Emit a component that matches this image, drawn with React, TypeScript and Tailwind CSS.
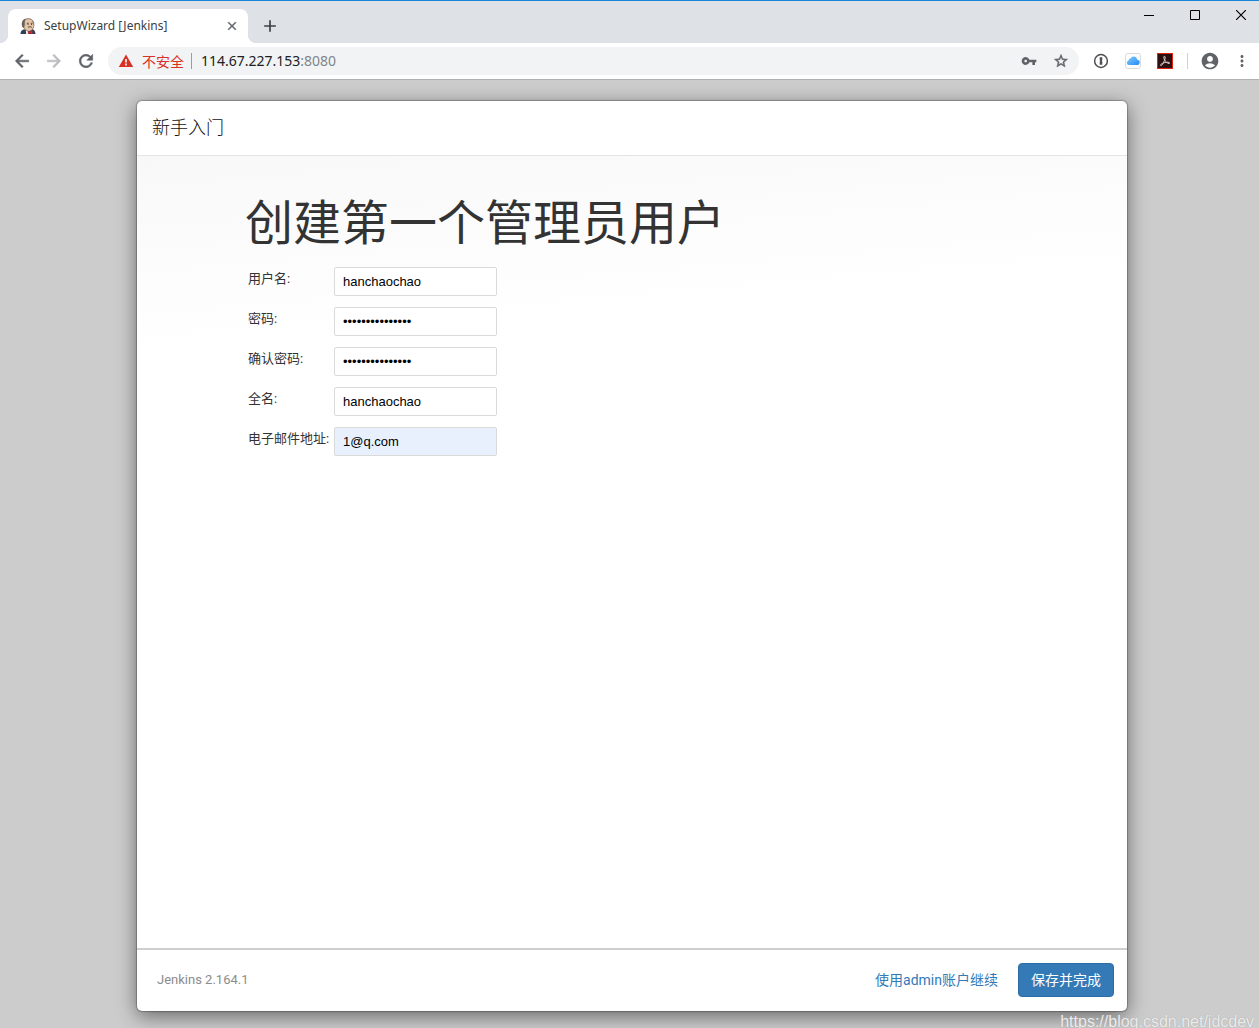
import React from "react";
import { MdAccountCircle, MdAdd, MdMoreVert, MdVpnKey } from "react-icons/md";

const toolButton = "flex h-7 w-8 shrink-0 items-center justify-center";

function BoldIcon({ d, className }: { d: string; className: string }) {
  return (
    <svg viewBox="0 0 24 24" className={className} fill="currentColor" stroke="currentColor" strokeWidth=".7" aria-hidden="true">
      <path d={d} />
    </svg>
  );
}

const iconPaths = {
  back: "M20 11H7.830l5.590-5.590L12 4l-8 8 8 8 1.410-1.410L7.830 13H20v-2z",
  forward: "M12 4l-1.410 1.410L16.170 11H4v2h12.170l-5.580 5.590L12 20l8-8z",
  reload:
    "M17.650 6.350A7.958 7.958 0 0 0 12 4c-4.420 0-7.990 3.580-7.990 8s3.570 8 7.990 8c3.730 0 6.840-2.550 7.730-6h-2.080A5.990 5.990 0 0 1 12 18c-3.310 0-6-2.690-6-6s2.690-6 6-6c1.660 0 3.140.690 4.220 1.780L13 11h7V4l-2.350 2.350z",
  close: "M19 6.410L17.590 5 12 10.590 6.410 5 5 6.410 10.590 12 5 17.590 6.410 19 12 13.410 17.590 19 19 17.590 13.410 12z",
  star: "M22 9.240l-7.190-.620L12 2 9.190 8.630 2 9.240l5.460 4.730L5.820 21 12 17.270 18.180 21l-1.630-7.030L22 9.240zM12 15.400l-3.760 2.270 1-4.280-3.320-2.880 4.380-.380L12 6.100l1.710 4.040 4.380.380-3.320 2.880 1 4.280L12 15.400z",
};

function JenkinsIcon() {
  return (
    <svg viewBox="0 0 16 16" className="size-4 shrink-0" aria-hidden="true">
      <path d="M.5 16c0-2.400.8-3.900 2.800-4.600l8.700-.4c2.300.6 3.300 2.300 3.500 5z" fill="#2f4152" />
      <path d="M3 6C2.800 2.600 4.900.7 8 .6c3.500 0 5.800 2 5.900 5.400.1 3.600-1.500 7.200-5 7.300C5.200 13.200 3.200 9.800 3 6z" fill="#e3c4a6" stroke="#5b4b40" strokeWidth=".6" />
      <path d="M2.300 9C1.200 5.800 1.700 2.300 4.800 1l1.200.3C4.700 2.700 4.600 4.800 4.800 7.200L3.900 10z" fill="#6b625b" />
      <path d="M12.200 2.200c1.300.9 1.900 2.800 1.500 4.800l-.8-.9z" fill="#8b7b6e" />
      <path d="M6.800 5.300h2M10.700 5.300h1.700M8 9.300c1.300-.7 2.900-.7 3.900 0" stroke="#54463c" strokeWidth=".9" fill="none" />
      <circle cx="8" cy="6.500" r=".5" fill="#222" />
      <circle cx="11.500" cy="6.500" r=".5" fill="#222" />
      <path d="M5.800 12.400l2.200 1L8.500 16H6.300z" fill="#fff" />
      <path d="M7.800 13l1.900.8 2.600-.8v3l-2.600-.9-1.900.9z" fill="#d7282f" />
    </svg>
  );
}

function WarningIcon() {
  return (
    <svg viewBox="0 0 16 16" className="size-4 shrink-0 text-[#d93025]" aria-hidden="true">
      <path d="M8 1.500L15.200 14H.8z" fill="currentColor" />
      <path d="M8 6v3.500M8 10.500v2" stroke="#fff" strokeWidth="1.600" />
    </svg>
  );
}

function PasswordManagerIcon() {
  return (
    <svg viewBox="0 0 16 16" className="size-4" aria-hidden="true">
      <circle cx="8" cy="8" r="6.400" fill="#fff" stroke="#4d4f52" strokeWidth="1.500" />
      <path d="M6.700 4.300h2.600v3l-.6.700.6.600v3.100H6.700v-3l.6-.7-.6-.6z" fill="#4d4f52" />
    </svg>
  );
}

function CloudIcon() {
  return (
    <svg viewBox="0 0 16 16" className="size-4" aria-hidden="true">
      <defs>
        <linearGradient id="cloud" x1="0" x2="1" y1="0" y2="1">
          <stop offset="0" stopColor="#7fd0fb" />
          <stop offset="1" stopColor="#2387f5" />
        </linearGradient>
      </defs>
      <rect x=".5" y=".5" width="15" height="15" rx="2" fill="#fdfdfd" stroke="#d9dbdd" />
      <path d="M4 12a2.300 2.300 0 0 1-.5-4.500 2 2 0 0 1 2-1.900 3.500 3.500 0 0 1 6.700 1.200A2.600 2.600 0 0 1 12 12z" fill="url(#cloud)" />
    </svg>
  );
}

function AcrobatIcon() {
  return (
    <svg viewBox="0 0 16 16" className="size-4" aria-hidden="true">
      <rect x=".5" y=".5" width="15" height="15" fill="#2c1011" stroke="#e1250b" />
      <path d="M7.100 3.300c1.300-.5 1.300 2 .4 4.100-.9 2.200-2.500 5.300-3.700 5.200-1.300-.4.500-2.200 3.400-2.900 2.600-.7 5.300-.7 5.500.3.100 1.200-2.600.3-4.200-1.700C7.100 6.700 6.300 4.200 7.100 3.300z" fill="none" stroke="#d8cccc" strokeWidth="1" />
    </svg>
  );
}

function TabStrip() {
  return (
    <div className="flex h-[43px] items-start justify-between border-t border-[#1883d7] bg-[#dee1e6]">
      <div className="flex h-full items-end">
        <div className="h-2 w-2 bg-[radial-gradient(circle_at_0_0,transparent_8px,#fff_8px)]" />
        <div className="flex h-[34px] w-60 items-center rounded-t-lg bg-white pr-2 pl-3">
          <JenkinsIcon />
          <span className="ml-2 flex-1 truncate font-['Noto_Sans',sans-serif] text-xs text-[#3c4043]">SetupWizard [Jenkins]</span>
          <button type="button" aria-label="Close tab" className="flex size-4 items-center justify-center text-[#5f6368]">
            <BoldIcon d={iconPaths.close} className="size-[14px]" />
          </button>
        </div>
        <div className="h-2 w-2 bg-[radial-gradient(circle_at_100%_0,transparent_8px,#fff_8px)]" />
        <button type="button" aria-label="New tab" className="flex h-[34px] w-7 items-center justify-center text-[#3c4043]">
          <MdAdd size={20} />
        </button>
      </div>
      <div className="flex gap-[10px] text-black">
        <button type="button" aria-label="Minimize" className="flex h-7 w-9 items-center justify-center">
          <svg viewBox="0 0 10 10" className="size-[10px]"><path d="M0 5.500h10" stroke="currentColor" /></svg>
        </button>
        <button type="button" aria-label="Maximize" className="flex h-7 w-9 items-center justify-center">
          <svg viewBox="0 0 10 10" className="size-[10px]"><path d="M.5.5h9v9h-9z" fill="none" stroke="currentColor" /></svg>
        </button>
        <button type="button" aria-label="Close" className="flex h-7 w-9 items-center justify-center">
          <svg viewBox="0 0 10 10" className="size-[10px]"><path d="M0 0l10 10M10 0L0 10" stroke="currentColor" strokeWidth="1.200" /></svg>
        </button>
      </div>
    </div>
  );
}

function Toolbar() {
  return (
    <div className="flex h-[37px] items-center border-b border-[#b1b1b1] bg-white pr-px pl-[6px] text-[#5f6368]">
      <button type="button" aria-label="Back" className={toolButton}><BoldIcon d={iconPaths.back} className="size-5" /></button>
      <button type="button" aria-label="Forward" className={toolButton + " text-[#babcbe]"}><BoldIcon d={iconPaths.forward} className="size-5" /></button>
      <button type="button" aria-label="Reload" className={toolButton}><BoldIcon d={iconPaths.reload} className="size-5" /></button>
      <div className="mx-[6px] flex h-7 min-w-0 flex-1 items-center rounded-full bg-[#f1f3f4] pr-[2px] pl-[10px]">
        <WarningIcon />
        <span className="ml-2 font-['Noto_Sans_CJK_SC',sans-serif] text-sm whitespace-nowrap text-[#d93025]">不安全</span>
        <span className="ml-[7px] h-4 w-px bg-[#9b9da0]" />
        <span className="ml-[9px] flex-1 truncate font-['Noto_Sans',sans-serif] text-sm text-[#202124]">
          114.67.227.153<span className="text-[#80868b]">:8080</span>
        </span>
        <button type="button" aria-label="Saved passwords" className={toolButton}><MdVpnKey size={16} /></button>
        <button type="button" aria-label="Bookmark" className={toolButton}><BoldIcon d={iconPaths.star} className="size-4" /></button>
      </div>
      <button type="button" aria-label="Password manager" className={toolButton}><PasswordManagerIcon /></button>
      <button type="button" aria-label="Cloud bookmarks" className={toolButton}><CloudIcon /></button>
      <button type="button" aria-label="Acrobat" className={toolButton}><AcrobatIcon /></button>
      <span className="mr-[6px] ml-[6px] h-4 w-px bg-[#cfd1d4]" />
      <button type="button" aria-label="Profile" className={toolButton}><MdAccountCircle size={20} /></button>
      <button type="button" aria-label="Menu" className={toolButton}><MdMoreVert size={18} /></button>
    </div>
  );
}

const fields = [
  { id: "username", label: "用户名:", type: "text", value: "hanchaochao", filled: false },
  { id: "password1", label: "密码:", type: "password", value: "abcdefghijklmno", filled: false },
  { id: "password2", label: "确认密码:", type: "password", value: "abcdefghijklmno", filled: false },
  { id: "fullname", label: "全名:", type: "text", value: "hanchaochao", filled: false },
  { id: "email", label: "电子邮件地址:", type: "text", value: "1@q.com", filled: true },
];

function SetupDialog() {
  return (
    <section className="flex flex-1 flex-col overflow-hidden rounded-[5px] bg-white font-[Roboto,'Noto_Sans_CJK_SC',sans-serif] text-[#333] shadow-[0_0_1px_1px_rgba(0,0,0,0.25),0_5px_20px_rgba(0,0,0,0.5)]">
      <header className="border-b border-[#e5e5e5] px-[15px] py-[14px]">
        <h4 className="text-lg leading-[26px] font-light text-[#111]">新手入门</h4>
      </header>
      <form id="first-user" className="flex-1 bg-[linear-gradient(175deg,#f8f8f8,#fff_200px)] pt-[42px] pl-[108px]">
        <h1 className="text-5xl leading-[52px]">创建第一个管理员用户</h1>
        <div className="mt-[17px] ml-[3px] grid grid-cols-[86px_163px] gap-y-[11px]">
          {fields.map((f) => (
            <React.Fragment key={f.id}>
              <label htmlFor={f.id} className="text-[13px] leading-6 whitespace-nowrap">{f.label}</label>
              <input
                id={f.id}
                type={f.type}
                defaultValue={f.value}
                className={
                  "h-[29px] rounded-[2px] border border-[#dadada] px-2 font-['Liberation_Sans',sans-serif] text-[13px] text-black " +
                  (f.filled ? "bg-[#e8f0fe]" : "bg-white")
                }
              />
            </React.Fragment>
          ))}
        </div>
      </form>
      <footer className="flex items-center border-t-2 border-[#cfcfcf] pt-[13px] pr-[13px] pb-[14px] pl-5">
        <span className="flex-1 text-[13px] text-[#8c8c8c]">Jenkins 2.164.1</span>
        <a href="#continue" className="mr-5 text-sm text-[#337ab7]">使用admin账户继续</a>
        <button type="submit" form="first-user" className="h-[34px] rounded-[4px] border border-[#2e6da4] bg-[#337ab7] px-3 text-sm text-white">
          保存并完成
        </button>
      </footer>
    </section>
  );
}

export default function App() {
  return (
    <div className="relative flex min-h-screen flex-col overflow-hidden bg-[#ccc]">
      <TabStrip />
      <Toolbar />
      <main className="flex flex-1 flex-col pt-[21px] pr-[132px] pb-[17px] pl-[137px]">
        <SetupDialog />
      </main>
      <span className="absolute -right-1 -bottom-1 font-['Liberation_Sans',sans-serif] text-base leading-5 text-[#ececec] [text-shadow:0_0_1px_#999]">
        https://blog.csdn.net/jdcdev_
      </span>
    </div>
  );
}
